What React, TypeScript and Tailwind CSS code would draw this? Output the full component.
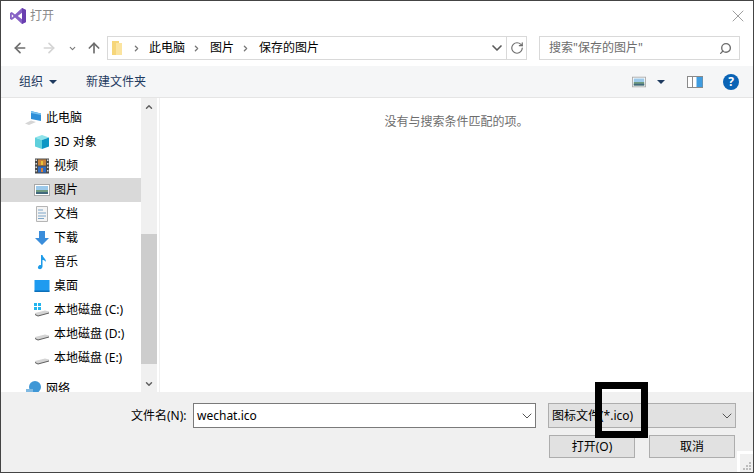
import React from 'react';
import { ArrowLeft, ArrowRight, ArrowUp, ChevronDown, ChevronRight, ChevronUp, RotateCw, Search, X } from 'lucide-react';

const font = { fontFamily: '"Noto Sans", "Noto Sans CJK SC", sans-serif' };

const VsLogo = () => (
  <svg width="18" height="18" viewBox="0 0 18 18">
    <path d="M13 1 L17 3 V15 L13 17 L6 10.5 L2.8 13 L1 12 V6 L2.8 5 L6 7.5 Z M13 5.8 L8.8 9 L13 12.2 Z M2.8 7.2 V10.8 L4.6 9 Z" fill="#8661c5" fillRule="evenodd" />
    <path d="M13 1 L17 3 V15 L13 17 V12.2 V5.8 Z" fill="#6a3fb0" />
  </svg>
);

const Folder = () => (
  <svg width="11" height="16" viewBox="0 0 11 16">
    <rect x="0" y="1" width="7" height="14" fill="#f6d67a" />
    <rect x="4" y="3" width="6" height="12" fill="#fbe4a0" />
  </svg>
);

const PicIcon = ({ size = 16 }: { size?: number }) => (
  <svg width={size} height={size} viewBox="0 0 16 16">
    <rect x="0.5" y="2.5" width="15" height="11" fill="#fff" stroke="#a8a8a8" />
    <rect x="2" y="4" width="12" height="4" fill="#9cc9ea" />
    <rect x="2" y="8" width="12" height="4" fill="#6f9a80" />
    <rect x="2" y="10" width="12" height="2" fill="#41687c" />
  </svg>
);

const PcIcon = () => (
  <svg width="17" height="16" viewBox="0 0 17 16">
    <path d="M6 1 L16 3.5 V11 L6 9 Z" fill="#2f8fd8" />
    <path d="M6 1 L9 2 L16 3.5 V5 L6 3 Z" fill="#7cc4f0" />
    <path d="M0 13.5 L6 10.5 L11 12 L4 15 Z" fill="#d6d6d6" />
  </svg>
);

const CubeIcon = () => (
  <svg width="16" height="16" viewBox="0 0 16 16">
    <path d="M8 1 L15 3.5 L8 6 L1 3.5 Z" fill="#8fe3ea" />
    <path d="M1 3.5 L8 6 V15 L1 12.5 Z" fill="#5fd0dc" />
    <path d="M15 3.5 L8 6 V15 L15 12.5 Z" fill="#0d96c4" />
  </svg>
);

const FilmIcon = () => (
  <svg width="16" height="16" viewBox="0 0 16 16">
    <rect x="1" y="0.5" width="14" height="15" fill="#4a4a4a" />
    <path d="M1.5 1.5h1.5v1.5h-1.5zM1.5 5h1.5v1.5h-1.5zM1.5 8.5h1.5v1.5h-1.5zM1.5 12h1.5v1.5h-1.5zM13 1.5h1.5v1.5h-1.5zM13 5h1.5v1.5h-1.5zM13 8.5h1.5v1.5h-1.5zM13 12h1.5v1.5h-1.5z" fill="#d9d9d9" />
    <rect x="4" y="1.5" width="8" height="6" fill="#c8823a" />
    <rect x="4" y="8.5" width="8" height="6" fill="#2f6bc0" />
    <rect x="7" y="3" width="2" height="4" fill="#e8c23a" />
    <rect x="7" y="10" width="2" height="4" fill="#d8803a" />
  </svg>
);

const DocIcon = () => (
  <svg width="16" height="16" viewBox="0 0 16 16">
    <path d="M2.5 0.5 H13.5 V15.5 H2.5 Z" fill="#f4f4f4" stroke="#b5b5b5" />
    <path d="M4 4 H9 M4 7 H12 M4 10 H12 M4 12.5 H10" stroke="#7ea6c8" />
  </svg>
);

const DownIcon = () => (
  <svg width="16" height="16" viewBox="0 0 16 16">
    <path d="M5 1 H11 V8 H15 L8 15 L1 8 H5 Z" fill="#3a8ddb" />
  </svg>
);

const MusicIcon = () => (
  <svg width="16" height="16" viewBox="0 0 16 16">
    <path d="M7 1 H8.5 C9 4 12 4.5 12 8 C11 6.5 9.5 6 8.5 6 V12.5 C8.5 14.5 6.5 15.5 5 15 C3.5 14.5 3.5 12.5 5 11.5 C5.6 11.1 6.4 11 7 11.2 Z" fill="#1e9be8" />
  </svg>
);

const DesktopIcon = () => (
  <svg width="16" height="16" viewBox="0 0 16 16">
    <rect x="0.5" y="2" width="15" height="11.5" fill="#1e9bf0" />
    <rect x="0.5" y="12.5" width="15" height="1.5" fill="#0c6fb8" />
  </svg>
);

const DriveIcon = ({ win = false }: { win?: boolean }) => (
  <svg width="16" height="16" viewBox="0 0 16 16">
    <path d="M1 11 L11 8.5 L15 9.5 V11 L4 14 L1 12.5 Z" fill="#d4d4d4" />
    <path d="M1 12 L4 13.5 L15 10.5 V11.5 L4 14.5 L1 13 Z" fill="#5e5e5e" />
    {win && (
      <>
        <rect x="0" y="1" width="3" height="3" fill="#22b5ee" />
        <rect x="4" y="1" width="3" height="3" fill="#22b5ee" />
        <rect x="0" y="5" width="3" height="3" fill="#22b5ee" />
        <rect x="4" y="5" width="3" height="3" fill="#22b5ee" />
      </>
    )}
  </svg>
);

const NetIcon = () => (
  <svg width="16" height="16" viewBox="0 0 16 16">
    <circle cx="9" cy="6" r="6" fill="#3f97d6" />
    <rect x="0" y="8" width="7" height="6" fill="#7fb9e2" />
  </svg>
);

const PaneIcon = () => (
  <svg width="16" height="12" viewBox="0 0 16 12">
    <rect x="0.5" y="0.5" width="15" height="11" fill="#fff" stroke="#8a8a8a" />
    <rect x="5" y="1" width="1" height="10" fill="#8a8a8a" />
    <rect x="9.5" y="1" width="6" height="10" fill="#3f9ce0" />
  </svg>
);

const Caret = () => (
  <svg width="8" height="4" viewBox="0 0 8 4">
    <path d="M0 0 H8 L4 4 Z" fill="#1e3a5f" />
  </svg>
);

const navItems = [
  { label: '3D 对象', icon: <CubeIcon /> },
  { label: '视频', icon: <FilmIcon /> },
  { label: '图片', icon: <PicIcon />, selected: true },
  { label: '文档', icon: <DocIcon /> },
  { label: '下载', icon: <DownIcon /> },
  { label: '音乐', icon: <MusicIcon /> },
  { label: '桌面', icon: <DesktopIcon /> },
  { label: '本地磁盘 (C:)', icon: <DriveIcon win /> },
  { label: '本地磁盘 (D:)', icon: <DriveIcon /> },
  { label: '本地磁盘 (E:)', icon: <DriveIcon /> },
];

export default function App() {
  return (
    <div style={font} className="relative w-[754px] h-[473px] overflow-hidden bg-white border border-[#444444] flex flex-col text-[12px] text-black">
      {/* title bar */}
      <div className="h-[29px] shrink-0 flex items-center pl-[8px]">
        <VsLogo />
        <span className="ml-[3px] text-[#8a8a8a]">打开</span>
        <X className="ml-auto mr-[5px] w-[20px] h-[20px] text-[#8c8c8c]" strokeWidth={1} />
      </div>

      {/* nav row */}
      <div className="h-[36px] shrink-0 flex items-center">
        <ArrowLeft className="ml-[11px] w-[16px] h-[16px] text-[#6d6d6d]" strokeWidth={2.5} />
        <ArrowRight className="ml-[13px] w-[16px] h-[16px] text-[#d4d4d4]" strokeWidth={2.5} />
        <ChevronDown className="ml-[11px] w-[9px] h-[9px] text-[#7a7a7a]" strokeWidth={3} />
        <ArrowUp className="ml-[9px] w-[16px] h-[16px] text-[#6d6d6d]" strokeWidth={2.5} />
        <div className="ml-[5px] w-[420px] h-[24px] border border-[#d9d9d9] flex items-center">
          <div className="ml-[4px] w-[12px]"><Folder /></div>
          <ChevronRight className="ml-[8px] w-[9px] h-[9px] text-[#777777]" strokeWidth={3.5} />
          <span className="ml-[8px]">此电脑</span>
          <ChevronRight className="ml-[7px] w-[9px] h-[9px] text-[#777777]" strokeWidth={3.5} />
          <span className="ml-[9px]">图片</span>
          <ChevronRight className="ml-[7px] w-[9px] h-[9px] text-[#777777]" strokeWidth={3.5} />
          <span className="ml-[9px]">保存的图片</span>
          <ChevronDown className="ml-auto mr-[1px] w-[16px] h-[16px] text-[#5a5a5a]" strokeWidth={2.5} />
          <div className="w-[20px] h-full border-l border-[#d9d9d9] flex items-center justify-center">
            <RotateCw className="w-[14px] h-[14px] text-[#6d6d6d]" strokeWidth={2} />
          </div>
        </div>
        <div className="ml-[12px] w-[201px] h-[24px] border border-[#d9d9d9] flex items-center pl-[9px] text-[#6d6d6d]">
          <span>搜索"保存的图片"</span>
          <Search className="ml-auto mr-[7px] w-[13px] h-[13px] -scale-x-100 text-[#6d6d6d]" strokeWidth={2.5} />
        </div>
      </div>

      {/* toolbar */}
      <div className="h-[32px] shrink-0 bg-[#f5f6f7] border-b border-[#e5e5e5] flex items-center text-[#1e3a5f]">
        <span className="ml-[18px]">组织</span>
        <div className="ml-[6px]"><Caret /></div>
        <span className="ml-[29px]">新建文件夹</span>
        <div className="ml-auto flex items-center">
          <PicIcon size={14} />
          <div className="ml-[11px]"><Caret /></div>
          <div className="ml-[22px] flex items-center"><PaneIcon /></div>
          <div className="ml-[20px] mr-[14px] w-[16px] h-[16px] rounded-full bg-[#0a63b5] text-white font-bold text-[12px] leading-[16px] text-center">?</div>
        </div>
      </div>

      {/* main */}
      <div className="flex-1 min-h-0 flex">
        <div className="w-[140px] shrink-0 overflow-hidden pt-[8px]">
          <div className="h-[24px] flex items-center pl-[24px]">
            <div className="w-[21px] h-[16px] flex"><PcIcon /></div>
            <span>此电脑</span>
          </div>
          {navItems.map((item) => (
            <div key={item.label} className={`h-[24px] flex items-center pl-[33px] ${item.selected ? 'bg-[#d9d9d9]' : ''}`}>
              <div className="w-[16px] h-[16px] flex">{item.icon}</div>
              <span className="ml-[4px] whitespace-nowrap">{item.label}</span>
            </div>
          ))}
          <div className="h-[24px] mt-[7px] flex items-center pl-[25px]">
            <div className="w-[20px]"><NetIcon /></div>
            <span>网络</span>
          </div>
        </div>
        <div className="w-[16px] shrink-0 bg-[#f0f0f0] flex flex-col items-center">
          <div className="h-[17px] flex items-center justify-center"><ChevronUp className="w-[10px] h-[10px] text-[#606060]" strokeWidth={3.5} /></div>
          <div className="h-[119px] shrink-0" />
          <div className="w-full h-[130px] shrink-0 bg-[#cdcdcd]" />
          <div className="flex-1 flex items-end pb-[3px]"><ChevronDown className="w-[10px] h-[10px] text-[#606060]" strokeWidth={3.5} /></div>
        </div>
        <div className="flex-1 ml-[2px] border-l border-[#f0f0f0] pt-[15px] pl-[1px] pr-[1px] text-center text-[#6d6d6d]">没有与搜索条件匹配的项。</div>
      </div>

      {/* footer */}
      <div className="relative h-[80px] shrink-0 bg-[#f0f0f0] flex flex-col">
        <div className="flex items-center mt-[11px] h-[25px]">
          <span className="ml-[130px] w-[62px]">文件名(N):</span>
          <div className="w-[343px] h-[25px] bg-white border border-[#7a7a7a] flex items-center pl-[3px]">
            <span>wechat.ico</span>
            <ChevronDown className="ml-auto w-[16px] h-[16px] text-[#555555]" strokeWidth={1.5} />
          </div>
          <div className="ml-[12px] w-[188px] h-[25px] bg-[#e1e1e1] border border-[#adadad] flex items-center pl-[3px]">
            <span>图标文件(*.ico)</span>
            <ChevronDown className="ml-auto w-[16px] h-[16px] text-[#555555]" strokeWidth={1.5} />
          </div>
        </div>
        <div className="flex justify-end mt-[7px] pr-[18px] gap-[14px]">
          <div className="w-[86px] h-[23px] bg-[#e1e1e1] border border-[#adadad] flex items-center justify-center">打开(O)</div>
          <div className="w-[86px] h-[23px] bg-[#e1e1e1] border border-[#adadad] flex items-center justify-center">取消</div>
        </div>
        {/* resize grip */}
        <div className="absolute right-0 bottom-0 w-[16px] h-[21px] bg-white">
          <div className="absolute right-0 bottom-0 w-[13px] h-[18px] bg-[#f0f0f0]" />
          <svg className="absolute right-[2px] bottom-[2px]" width="8" height="8" viewBox="0 0 8 8">
            <path d="M6 0h2v2H6zM3 3h2v2H3zM6 3h2v2H6zM0 6h2v2H0zM3 6h2v2H3zM6 6h2v2H6z" fill="#bdbdbd" />
          </svg>
        </div>
      </div>

      {/* annotation box drawn over the screenshot */}
      <div className="absolute left-[594px] top-[381px] w-[53px] h-[56px] border-[7px] border-black" />
    </div>
  );
}
